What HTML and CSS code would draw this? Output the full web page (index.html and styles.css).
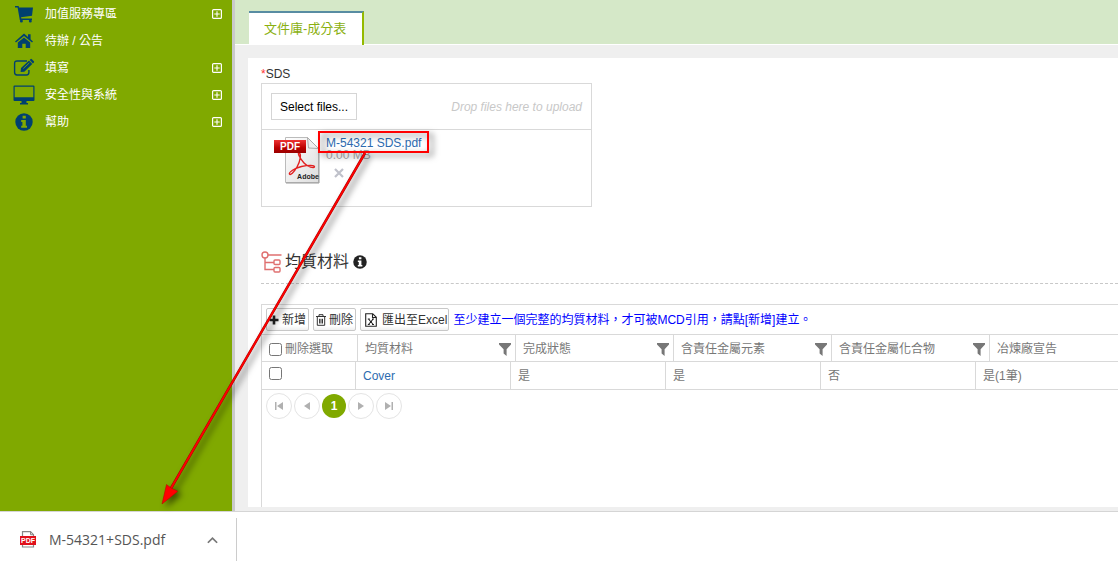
FILE: index.html
```html
<!DOCTYPE html>
<html lang="zh-Hant">
<head>
<meta charset="utf-8">
<meta name="viewport" content="width=device-width, initial-scale=1">
<title>文件庫-成分表</title>
<link rel="stylesheet" href="styles.css">
</head>
<body>
<svg class="defs" aria-hidden="true">
  <symbol id="plus-box" viewBox="0 0 10 10"><rect x=".6" y=".6" width="8.8" height="8.8" rx="1" fill="none" stroke="currentColor" stroke-width="1.2"/><path d="M5 2.3v5.4M2.3 5h5.4" stroke="currentColor" stroke-width="1.1"/></symbol>
  <symbol id="filter" viewBox="0 0 12 13"><path fill="currentColor" d="M0 0h12v1.4L7.6 6.2V13L4.6 10.4V6.2L0 1.4z"/></symbol>
  <symbol id="info" viewBox="0 0 18 18"><circle cx="9" cy="9" r="8.7" fill="currentColor"/><path fill="var(--hole)" d="M7.6 2.8h3.2v2.8H7.6zM6.2 7h4.6v5.7H12v2H6.2v-2h1.2V9H6.2z"/></symbol>
</svg>
<div class="app">
  <div class="workspace">
    <nav class="sidebar">
      <a class="menu-item" href="#">
        <svg class="menu-icon" viewBox="0 0 22 20"><path fill="currentColor" d="M2 2h3.6l.5 1.6H20l-1 8.2-11 1.4.3 1.2H19V16H6.8L4.6 3.4H2z"/><circle cx="8.4" cy="17" r="1.5" fill="currentColor"/><circle cx="17.3" cy="17" r="1.5" fill="currentColor"/></svg>
        <span class="menu-label">加值服務專區</span><svg class="menu-more"><use href="#plus-box"/></svg></a>
      <a class="menu-item" href="#">
        <svg class="menu-icon" viewBox="0 0 22 20"><path fill="currentColor" d="M11 2.6 15 6V3.2h2.6v5L20 10.5l-1 1.1L11 5l-8 6.6-1-1.1zM11 6.4l6.2 5.2V17h-4.5v-4.2H9.3V17H4.8v-5.4z"/></svg>
        <span class="menu-label">待辦 / 公告</span></a>
      <a class="menu-item" href="#">
        <svg class="menu-icon" viewBox="0 0 22 20"><path fill="none" stroke="currentColor" stroke-width="1.4" d="M14 3H4Q1.6 3 1.6 5.4v9.2Q1.6 17 4 17h9.5q2.4 0 2.4-2.4V12"/><path fill="currentColor" d="m8 10 8-7.4 3.3 3.5-8 7.6L7.6 14zM16.7 2l1-1q.6-.4 1.2.2l2 2q.6.7 0 1.3l-1 1z"/><path stroke="#80a900" stroke-width=".8" d="m10.3 10.5 6-5.6"/></svg>
        <span class="menu-label">填寫</span><svg class="menu-more"><use href="#plus-box"/></svg></a>
      <a class="menu-item" href="#">
        <svg class="menu-icon" viewBox="0 0 22 20"><path fill="currentColor" fill-rule="evenodd" d="M1.5.5h19q1 0 1 1V15q0 1-1 1h-7v2H15v1.4H7V18h1.5v-2h-7q-1 0-1-1V1.500q0-1 1-1zM1.700 1.700v10.600h18.600V1.700z"/></svg>
        <span class="menu-label">安全性與系統</span><svg class="menu-more"><use href="#plus-box"/></svg></a>
      <a class="menu-item" href="#">
        <svg class="menu-icon menu-info"><use href="#info"/></svg>
        <span class="menu-label">幫助</span><svg class="menu-more"><use href="#plus-box"/></svg></a>
    </nav>
    <main class="content">
      <div class="tabs"><a class="tab" href="#">文件庫-成分表</a></div>
      <section class="panel">
        <div class="field-label"><span class="required">*</span>SDS</div>
        <div class="upload">
          <div class="upload-drop"><button class="select-files" type="button">Select files...</button><em class="drop-hint">Drop files here to upload</em></div>
          <div class="upload-file">
            <svg class="pdf-icon" viewBox="0 0 46 48" role="img" aria-label="PDF">
              <defs><linearGradient id="paper" x2="1" y2="1"><stop offset="0" stop-color="#fff"/><stop offset="1" stop-color="#ddd"/></linearGradient><linearGradient id="band" x2="0" y2="1"><stop offset="0" stop-color="#e33"/><stop offset=".6" stop-color="#b00"/><stop offset="1" stop-color="#900"/></linearGradient></defs>
              <path d="M11.500.500h22l11 11v34h-33z" fill="url(#paper)" stroke="#bbb"/><path d="M12 46h33V12" fill="none" stroke="#999"/>
              <path d="m33.500.500 1 10.500 10 .5z" fill="#eee" stroke="#aaa"/>
              <path d="M25 16c2.500 0 1.500 8-2 14s-6.500 8.500-7.500 7 5-6 12-7.500 13-1.500 13 .3-7 .2-10.500-3.800-7-10-5-10z" fill="none" stroke="#e22020" stroke-width="1.400"/>
              <path d="M0 3h32v13H0z" fill="url(#band)"/>
              <text x="16" y="13" class="pdf-band">PDF</text><text x="34" y="42" class="pdf-brand">Adobe</text>
            </svg>
            <div class="file-info"><a class="link file-name" href="#">M-54321 SDS.pdf</a><span class="file-size">0.00 MB</span>
              <button class="file-remove" type="button" aria-label="移除"><svg viewBox="0 0 10 10"><path d="m1 1 8 8M9 1 1 9" stroke="#bfc1ca" stroke-width="2.200"/></svg></button></div>
          </div>
        </div>
        <h2 class="section-title">
          <svg class="tree-icon" viewBox="0 0 22 22"><g fill="none" stroke="#df7070" stroke-width="1.400"><circle cx="4" cy="4" r="3"/><path d="M7 4h13.500M4 7v11.500h9M4 11.500h9"/><rect x="13" y="9" width="6" height="4.500" rx="1"/><rect x="13" y="16.500" width="6" height="4.500" rx="1"/></g></svg>
          <span>均質材料</span><svg class="title-info"><use href="#info"/></svg>
        </h2>
        <div class="grid">
          <div class="toolbar">
            <button class="tool" type="button"><svg class="tool-icon" viewBox="0 0 10 10"><path d="M5 .5v9M.5 5h9" stroke="#222" stroke-width="2.600"/></svg>新增</button>
            <button class="tool" type="button"><svg class="tool-icon" viewBox="0 0 10 12"><path d="M0 2.500h10M3 2.300V.7h4v1.600M1.300 3v8.300h7.400V3M3.600 4.800v4.700M5 4.800v4.700M6.500 4.800v4.700" fill="none" stroke="#333"/></svg>刪除</button>
            <button class="tool excel" type="button"><svg class="excel-icon" viewBox="0 0 12 14"><path d="M.7.700h7l3.600 3.600v9H.7zM7.500.700v3.800h3.800M3.500 6l4.700 5.500M8.200 6l-4.700 5.500M2.800 6h2M7 6h2M2.800 11.500h2M7 11.500h2" fill="none" stroke="#222" stroke-width="1.100"/></svg>匯出至Excel</button>
            <span class="tool-note">至少建立一個完整的均質材料，才可被MCD引用，請點[新增]建立。</span>
          </div>
          <div class="table-clip">
            <table class="table head-table">
              <colgroup><col class="head-first"><col class="head-col"><col class="head-col"><col class="head-col"><col class="head-col"><col></colgroup>
              <thead><tr>
                <th><label class="check-label"><input class="check" type="checkbox">刪除選取</label></th>
                <th><div class="head-cell">均質材料<svg class="filter"><use href="#filter"/></svg></div></th>
                <th><div class="head-cell">完成狀態<svg class="filter"><use href="#filter"/></svg></div></th>
                <th><div class="head-cell">含責任金屬元素<svg class="filter"><use href="#filter"/></svg></div></th>
                <th><div class="head-cell">含責任金屬化合物<svg class="filter"><use href="#filter"/></svg></div></th>
                <th>冶煉廠宣告</th>
              </tr></thead>
            </table>
            <table class="table body-table">
              <colgroup><col class="body-first"><col class="body-col"><col class="body-col"><col class="body-col"><col class="body-col"><col></colgroup>
              <tbody><tr><td><input class="check" type="checkbox" aria-label="Cover"></td><td><a class="link" href="#">Cover</a></td><td>是</td><td>是</td><td>否</td><td>是(1筆)</td></tr></tbody>
            </table>
          </div>
          <div class="pager">
            <button class="page" type="button" aria-label="第一頁"><svg viewBox="0 0 8 8"><path d="M0 0h1.500v8H0zM8 0v8L2 4z"/></svg></button>
            <button class="page" type="button" aria-label="上一頁"><svg viewBox="0 0 8 8"><path d="M7 0v8L1 4z"/></svg></button>
            <button class="page current" type="button">1</button>
            <button class="page" type="button" aria-label="下一頁"><svg viewBox="0 0 8 8"><path d="M1 0v8l6-4z"/></svg></button>
            <button class="page" type="button" aria-label="最後頁"><svg viewBox="0 0 8 8"><path d="M0 0v8l6-4zM6.500 0H8v8H6.500z"/></svg></button>
          </div>
        </div>
      </section>
    </main>
  </div>
  <footer class="downloads">
    <div class="download">
      <svg class="download-icon" viewBox="0 0 16 17"><path d="M2.500 16V.7h8l3 3V16z" fill="#fff" stroke="#888" stroke-width="1.200"/><path d="M10.500.7v3h3" fill="none" stroke="#888"/><path fill="#e0101b" d="M0 5h16v9H0z"/><text class="download-band" x="8" y="12">PDF</text></svg>
      <a class="download-name" href="#">M-54321+SDS.pdf</a>
      <button class="download-menu" type="button" aria-label="選項"><svg viewBox="0 0 10 7"><path d="m.8 6 4.200-4.200L9.200 6" fill="none" stroke="#777" stroke-width="1.600"/></svg></button>
    </div>
  </footer>
</div>
<svg class="callout" viewBox="0 0 290 390" aria-hidden="true">
  <rect x="169" y="12" width="109" height="20" fill="none" stroke="#f00" stroke-width="2"/>
  <path d="M215 33 20 370" stroke="#a00000" stroke-width="2.600"/><path d="M215 33 20 370" stroke="#f00" stroke-width="1.700"/>
  <path d="m12 384 4.500-19.500 4.500 3.500 6.500 3-.500 1z" fill="#f00" stroke="#b00000" stroke-width=".5"/>
</svg>
</body>
</html>
```
FILE: styles.css
```css
* { box-sizing: border-box; }
body { margin: 0; background: #fff; color: #333; font: 12px/18px "Liberation Sans", "Noto Sans CJK TC", sans-serif; }
a { text-decoration: none; color: inherit; }
button { font: inherit; color: inherit; padding: 0; border: 0; background: none; }
svg { display: block; flex: none; }
.defs { position: absolute; width: 0; height: 0; }
.app { position: relative; display: flex; flex-direction: column; height: 100vh; overflow: hidden; }
.workspace { flex: 1; display: flex; min-height: 0; }
.sidebar { flex: none; width: 235px; background: #80a900; border-right: 3px solid #cacaca; }
.menu-item { display: flex; align-items: center; height: 27px; padding: 0 10px 0 13px; color: #fff; }
.menu-icon { width: 22px; height: 20px; color: #00406f; --hole: #80a900; }
.menu-info { width: 18px; height: 18px; margin: 0 2px; }
.menu-label { flex: 1; margin-left: 10px; }
.menu-more { width: 10px; height: 10px; }
.content { flex: 1; min-width: 0; display: flex; flex-direction: column; background: #efefef; }
.tabs { height: 45px; padding: 11px 0 0 14px; background: #d5e8c8; border-bottom: 1px solid #fff; }
.tab { display: block; width: 115px; height: 34px; padding-left: 15px; line-height: 32px; font-size: 13px; color: #8ab010; background: #fff; border-top: 2px solid #588ca2; border-right: 2px solid #94ba00; }
.panel { flex: 1; min-height: 0; display: flex; flex-direction: column; margin: 13px 0 4px 13px; padding: 7px 0 0 13px; background: #fff; }
.field-label { height: 18px; }
.required { color: #f33; }
.upload { width: 331px; border: 1px solid #d9d9d9; }
.upload-drop { display: flex; align-items: center; justify-content: space-between; height: 46px; padding: 0 9px; border-bottom: 1px solid #d9d9d9; }
.select-files { width: 86px; height: 27px; border: 1px solid #d5d5d5; color: #000; }
.drop-hint { color: #c8c8c8; }
.upload-file { display: flex; gap: 6px; height: 76px; padding: 7px 0 0 12px; }
.pdf-icon { width: 46px; height: 48px; }
.pdf-band { font: bold 10px "Liberation Sans", sans-serif; fill: #fff; text-anchor: middle; }
.pdf-brand { font: bold 7px "Liberation Sans", sans-serif; fill: #222; text-anchor: middle; }
.file-info { display: flex; flex-direction: column; align-items: flex-start; line-height: 12px; }
.link { color: #2d6bb0; }
.file-size { color: #aaa; }
.file-remove { margin: 7px 8px; }
.file-remove svg { width: 10px; height: 10px; }
.section-title { display: flex; align-items: center; height: 43px; margin: 34px 0 0; font-size: 16px; font-weight: 400; border-bottom: 1px dashed #c8c8c8; }
.tree-icon { width: 22px; height: 22px; margin-right: 2px; }
.title-info { width: 14px; height: 14px; margin-left: 4px; color: #222; --hole: #fff; }
.title-info use { width: 14px; height: 14px; }
.grid { flex: 1; min-height: 0; margin-top: 20px; border-top: 1px solid #d9d9d9; border-left: 1px solid #d9d9d9; }
.toolbar { display: flex; align-items: center; gap: 4px; height: 29px; padding-left: 4px; }
.tool { display: flex; align-items: center; gap: 3px; height: 23px; padding: 0 2px; border: 1px solid #c8c8c8; border-radius: 2px; background: linear-gradient(#fff 80%, #f0f0f0); color: #333; }
.tool-icon { width: 10px; height: 12px; }
.excel { gap: 5px; padding: 0 1px 0 4px; }
.excel-icon { width: 12px; height: 14px; }
.tool-note { color: #00f; white-space: nowrap; }
.table-clip { overflow: hidden; border-bottom: 1px solid #d9d9d9; }
.table { width: 100%; table-layout: fixed; border-collapse: separate; border-spacing: 0; color: #777; }
.table th, .table td { padding: 0 0 0 7px; border: 0 solid #d9d9d9; border-top-width: 1px; text-align: left; font-weight: 400; white-space: nowrap; }
.table th + th, .table td + td { border-left-width: 1px; }
.table th { height: 27px; padding-top: 2px; }
.table td { height: 28px; }
.table td:first-child { padding-bottom: 4px; }
.head-first { width: 95px; }
.head-col { width: 158px; }
.body-first { width: 93px; }
.body-col { width: 155px; }
.head-cell { display: flex; align-items: center; justify-content: space-between; padding-right: 4px; }
.filter { width: 12px; height: 13px; color: #777; }
.check-label { display: flex; align-items: center; gap: 3px; }
.check { display: block; width: 13px; height: 13px; margin: 0; }
.pager { display: flex; align-items: center; gap: 2px; padding: 3px 4px; }
.page { display: flex; align-items: center; justify-content: center; width: 26px; height: 26px; border: 1px solid #e4e4e4; border-radius: 50%; }
.page svg { width: 8px; height: 8px; fill: #b0b0b0; }
.current { width: 24px; height: 24px; border: 0; background: #80a900; color: #fff; font-weight: 700; }
.downloads { flex: none; height: 55px; padding: 6px 0 5px; border-top: 1px solid #d5d5d5; background: #fff; }
.download { display: flex; align-items: center; width: 237px; height: 43px; padding: 0 18px 0 20px; border-right: 1px solid #ccc; }
.download-icon { width: 16px; height: 17px; }
.download-band { font: bold 7px "Liberation Sans", sans-serif; fill: #fff; text-anchor: middle; }
.download-name { flex: 1; margin-left: 13px; font: 14px/20px "Open Sans", sans-serif; color: #555; }
.download-menu svg { width: 11px; height: 8px; }
.callout { position: absolute; left: 150px; top: 120px; width: 290px; height: 390px; pointer-events: none; filter: drop-shadow(4px 3px 3px rgba(0, 0, 0, .55)); }
```
